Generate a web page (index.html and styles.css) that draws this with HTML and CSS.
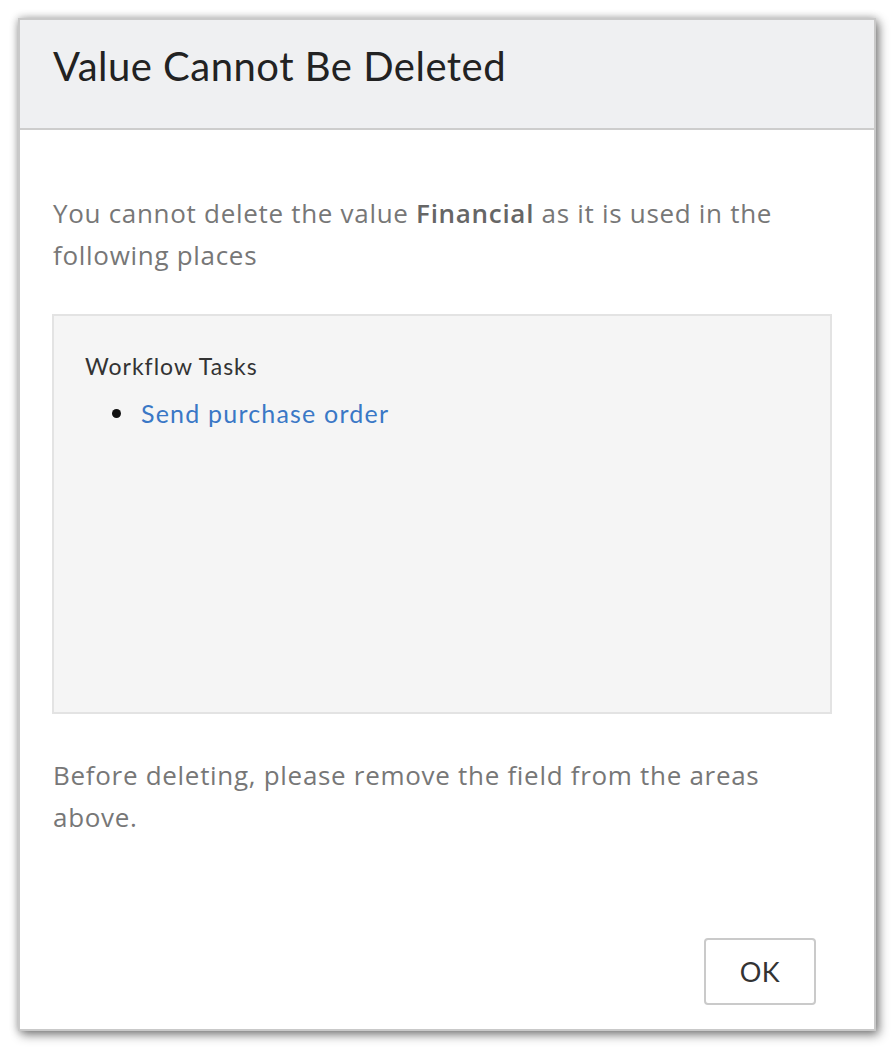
FILE: index.html
```html
<!DOCTYPE html>
<html>
<head>
<meta charset="utf-8">
<link rel="stylesheet" href="styles.css">
</head>
<body>
<div class="dialog">
  <div class="dialog-header">
    <h1 class="dialog-title">Value Cannot Be Deleted</h1>
  </div>
  <div class="dialog-body">
    <p class="message">You cannot delete the value <strong>Financial</strong> as it is used in the<br>following places</p>
    <div class="usage-box">
      <div class="usage-group">Workflow Tasks</div>
      <ul class="usage-list">
        <li class="usage-item"><a class="usage-link">Send purchase order</a></li>
      </ul>
    </div>
    <p class="message note">Before deleting, please remove the field from the areas above.</p>
  </div>
  <div class="dialog-footer">
    <button class="btn">OK</button>
  </div>
</div>
</body>
</html>
```
FILE: styles.css
```css
html, body {
  margin: 0;
  padding: 0;
  background: #ffffff;
}
body {
  font-family: Lato, "Open Sans", sans-serif;
  padding: 18px;
}
.dialog {
  width: 858px;
  height: 1013px;
  box-sizing: border-box;
  border: 2px solid #c9c9c9;
  background: #fff;
  box-shadow: 3px 4px 10px rgba(0,0,0,0.45), 0 0 8px rgba(0,0,0,0.25);
  display: flex;
  flex-direction: column;
}
.dialog-header {
  height: 108px;
  background: #eff0f2;
  border-bottom: 2px solid #cdcdcd;
  display: flex;
  align-items: center;
  padding-left: 33px;
}
.dialog-title {
  margin: 0;
  font-weight: 400;
  font-size: 40px;
  color: #222;
  letter-spacing: 0.5px;
  position: relative;
  top: -8px;
}
.dialog-body {
  padding: 62px 42px 0 32px;
  flex: 1;
}
.message {
  margin: 0;
  font-family: "Open Sans", Lato, sans-serif;
  font-size: 26px;
  line-height: 42px;
  color: #777;
  padding-left: 1px;
  letter-spacing: 0.7px;
  width: 770px;
}
.message strong {
  color: #666;
  font-weight: 600;
}
.usage-box {
  margin-top: 38px;
  height: 400px;
  box-sizing: border-box;
  background: #f5f5f5;
  border: 2px solid #e3e3e3;
  padding: 35px 31px;
}
.usage-group {
  font-size: 23px;
  line-height: 30px;
  color: #333;
  letter-spacing: 1px;
}
.usage-list {
  list-style: none;
  margin: 17px 0 0 0;
  padding-left: 27px;
}
.usage-item {
  display: flex;
  align-items: center;
  gap: 20px;
  font-size: 25px;
  line-height: 30px;
}
.usage-item::before {
  content: "";
  width: 9px;
  height: 9px;
  border-radius: 50%;
  background: #111;
}
.usage-link {
  color: #3a78c6;
  text-decoration: none;
  letter-spacing: 1.2px;
}
.note {
  margin-top: 40px;
}
.dialog-footer {
  display: flex;
  justify-content: flex-end;
  padding: 0 58px 24px 0;
}
.btn {
  width: 112px;
  height: 67px;
  background: #fff;
  border: 2px solid #cacaca;
  border-radius: 4px;
  font-family: Lato, "Open Sans", sans-serif;
  font-size: 27px;
  color: #333;
  letter-spacing: 0.5px;
}
```
